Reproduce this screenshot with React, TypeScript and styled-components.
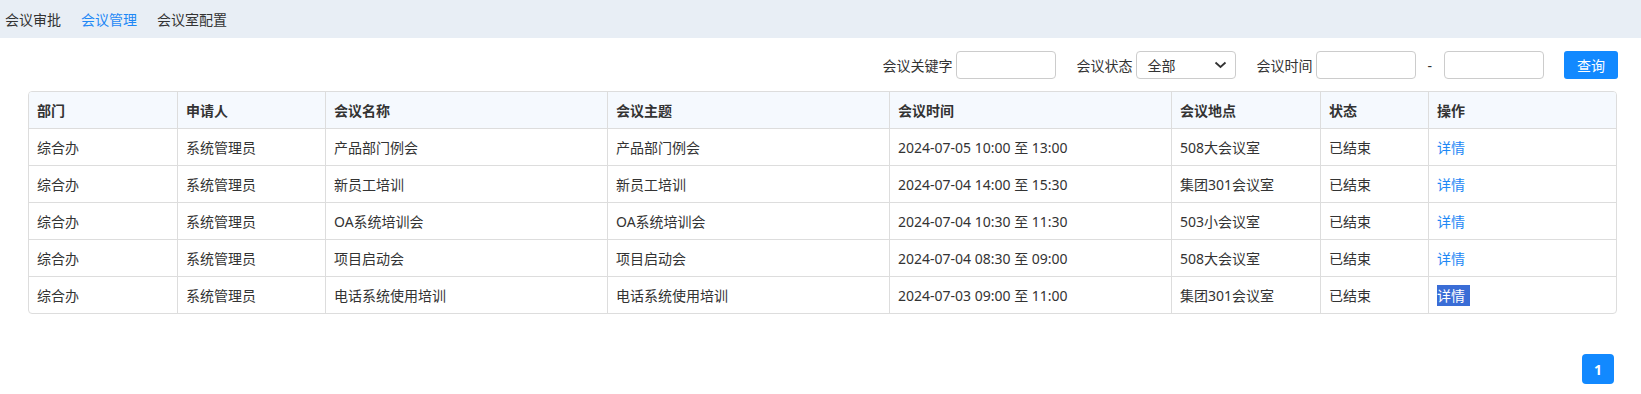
import React from "react";
import styled, { createGlobalStyle } from "styled-components";

const GlobalStyle = createGlobalStyle`
  body {
    margin: 0;
    background: #fff;
    font-family: "Noto Sans", "Noto Sans CJK SC", sans-serif;
    font-size: 14px;
    color: #333;
  }
  * {
    box-sizing: border-box;
  }
`;

type Meeting = {
  dept: string;
  applicant: string;
  name: string;
  topic: string;
  time: string;
  place: string;
  status: string;
};

const meetings: Meeting[] = [
  { dept: "综合办", applicant: "系统管理员", name: "产品部门例会", topic: "产品部门例会", time: "2024-07-05 10:00 至 13:00", place: "508大会议室", status: "已结束" },
  { dept: "综合办", applicant: "系统管理员", name: "新员工培训", topic: "新员工培训", time: "2024-07-04 14:00 至 15:30", place: "集团301会议室", status: "已结束" },
  { dept: "综合办", applicant: "系统管理员", name: "OA系统培训会", topic: "OA系统培训会", time: "2024-07-04 10:30 至 11:30", place: "503小会议室", status: "已结束" },
  { dept: "综合办", applicant: "系统管理员", name: "项目启动会", topic: "项目启动会", time: "2024-07-04 08:30 至 09:00", place: "508大会议室", status: "已结束" },
  { dept: "综合办", applicant: "系统管理员", name: "电话系统使用培训", topic: "电话系统使用培训", time: "2024-07-03 09:00 至 11:00", place: "集团301会议室", status: "已结束" },
];

const columns = [
  { title: "部门", width: 148 },
  { title: "申请人", width: 148 },
  { title: "会议名称", width: 282 },
  { title: "会议主题", width: 282 },
  { title: "会议时间", width: 282 },
  { title: "会议地点", width: 149 },
  { title: "状态", width: 108 },
  { title: "操作", width: 188 },
];

const App: React.FC = () => {
  return (
    <>
      <GlobalStyle />
      <TopBar>
        <Tab>会议审批</Tab>
        <Tab active>会议管理</Tab>
        <Tab>会议室配置</Tab>
      </TopBar>
      <Main>
        <FilterRow>
          <Field>
            <Label>会议关键字</Label>
            <TextInput />
          </Field>
          <Field>
            <Label>会议状态</Label>
            <Select>
              <span>全部</span>
              <svg width="13" height="8" viewBox="0 0 13 8">
                <path d="M1.5 1.5 L6.5 6 L11.5 1.5" fill="none" stroke="#333" strokeWidth="1.8" />
              </svg>
            </Select>
          </Field>
          <Field>
            <Label>会议时间</Label>
            <TextInput />
            <Dash>-</Dash>
            <TextInput />
          </Field>
          <SearchButton>查询</SearchButton>
        </FilterRow>

        <TableWrap>
          <Table>
            <colgroup>
              {columns.map((c) => (
                <col key={c.title} style={{ width: c.width }} />
              ))}
            </colgroup>
            <thead>
              <tr>
                {columns.map((c) => (
                  <Th key={c.title}>{c.title}</Th>
                ))}
              </tr>
            </thead>
            <tbody>
              {meetings.map((m, i) => (
                <Row key={i}>
                  <Td>{m.dept}</Td>
                  <Td>{m.applicant}</Td>
                  <Td>{m.name}</Td>
                  <Td>{m.topic}</Td>
                  <Td>{m.time}</Td>
                  <Td>{m.place}</Td>
                  <Td>{m.status}</Td>
                  <Td>
                    <DetailLink selected={i === meetings.length - 1}>详情</DetailLink>
                  </Td>
                </Row>
              ))}
            </tbody>
          </Table>
        </TableWrap>

        <Pager>
          <PageButton>1</PageButton>
        </Pager>
      </Main>
    </>
  );
};

export default App;

const TopBar = styled.div`
  height: 38px;
  background: #e8eef5;
  display: flex;
  align-items: center;
  gap: 20px;
  padding-left: 5px;
`;

const Tab = styled.div<{ active?: boolean }>`
  font-size: 14px;
  color: ${(p) => (p.active ? "#1e88f5" : "#333")};
  cursor: pointer;
`;

const Main = styled.div`
  padding: 13px 24px 0 28px;
`;

const FilterRow = styled.div`
  display: flex;
  justify-content: flex-end;
  align-items: center;
  gap: 20px;
  height: 28px;
  margin-right: -1px;
  margin-bottom: 12px;
`;

const Field = styled.div`
  display: flex;
  align-items: center;
`;

const Label = styled.span`
  font-size: 14px;
  color: #333;
  margin-right: 4px;
`;

const TextInput = styled.input`
  width: 100px;
  height: 28px;
  border: 1px solid #ccc;
  border-radius: 4px;
  outline: none;
  padding: 0 6px;
  font: inherit;
`;

const Select = styled.div`
  width: 100px;
  height: 28px;
  border: 1px solid #ccc;
  border-radius: 4px;
  display: flex;
  align-items: center;
  justify-content: space-between;
  padding: 0 8px 0 10px;
  font-size: 14px;
  color: #333;
`;

const Dash = styled.span`
  margin: 0 12px 0 11px;
  color: #333;
`;

const SearchButton = styled.button`
  width: 54px;
  height: 28px;
  border: none;
  border-radius: 3px;
  background: #1289ff;
  color: #fff;
  font: inherit;
  font-size: 14px;
  cursor: pointer;
`;

const TableWrap = styled.div`
  border: 1px solid #ddd;
  border-radius: 4px;
  overflow: hidden;
`;

const Table = styled.table`
  width: 100%;
  table-layout: fixed;
  border-collapse: separate;
  border-spacing: 0;
`;

const Th = styled.th`
  height: 37px;
  background: #f5f9fe;
  text-align: left;
  font-weight: bold;
  font-size: 14px;
  color: #333;
  padding: 0 8px;
  border-bottom: 1px solid #ddd;
  & + & {
    border-left: 1px solid #ddd;
  }
`;

const Row = styled.tr`
  &:last-child td {
    border-bottom: none;
    height: 36px;
  }
`;

const Td = styled.td`
  height: 37px;
  padding: 0 8px;
  font-size: 14px;
  color: #333;
  border-bottom: 1px solid #ddd;
  white-space: nowrap;
  & + & {
    border-left: 1px solid #ddd;
  }
`;

const DetailLink = styled.a<{ selected?: boolean }>`
  display: inline-block;
  line-height: 21px;
  padding-right: ${(p) => (p.selected ? "5px" : "0")};
  color: ${(p) => (p.selected ? "#fff" : "#1e88f5")};
  background: ${(p) => (p.selected ? "#3a6dd6" : "transparent")};
  cursor: pointer;
`;

const Pager = styled.div`
  display: flex;
  justify-content: flex-end;
  margin-top: 40px;
  padding-right: 3px;
`;

const PageButton = styled.div`
  width: 32px;
  height: 30px;
  border-radius: 4px;
  background: #1289ff;
  color: #fff;
  font-weight: bold;
  font-size: 14px;
  display: flex;
  align-items: center;
  justify-content: center;
`;
